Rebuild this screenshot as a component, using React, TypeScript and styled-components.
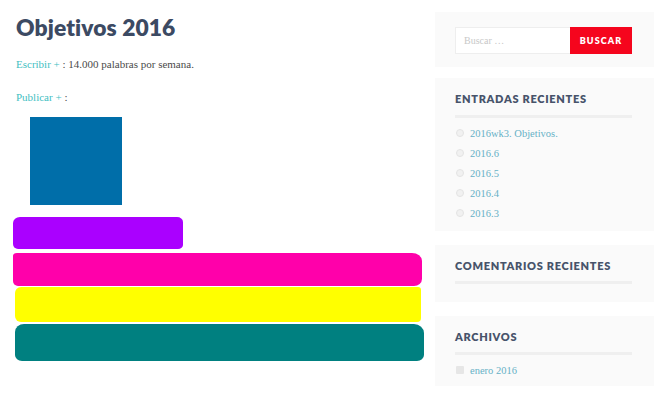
import React from "react";
import styled, { createGlobalStyle } from "styled-components";

const Global = createGlobalStyle`
  html, body { margin: 0; padding: 0; background: #ffffff; }
  body { font-family: "Liberation Serif", serif; }
  * { box-sizing: border-box; }
`;

const Page = styled.div`
  display: flex;
  align-items: flex-start;
  width: 654px;
  height: 400px;
  overflow: hidden;
`;

const Main = styled.main`
  width: 435px;
  flex: none;
  display: flex;
  flex-direction: column;
`;

const Title = styled.h1`
  margin: 14px 0 0 16px;
  font-family: "Lato", "Open Sans", sans-serif;
  font-weight: 800;
  font-size: 22.8px;
  line-height: 26px;
  letter-spacing: 0.1px;
  color: #3c4a63;
`;

const Para = styled.p<{ $top: number }>`
  margin: ${(p) => p.$top}px 0 0 16px;
  font-family: "Liberation Serif", serif;
  font-size: 11px;
  line-height: 20px;
  color: #4a4a4a;
`;

const TextLink = styled.a`
  color: #3fc0c2;
  text-decoration: none;
`;

const Chart = styled.div`
  display: flex;
  flex-direction: column;
  align-items: flex-start;
  margin-top: 10px;
`;

const Square = styled.div`
  width: 92px;
  height: 88px;
  margin-left: 30px;
  background: #006ea9;
`;

const Bar = styled.div<{
  $color: string;
  $left: number;
  $width: number;
  $height: number;
  $gap: number;
  $radius: string;
}>`
  margin: ${(p) => p.$gap}px 0 0 ${(p) => p.$left}px;
  width: ${(p) => p.$width}px;
  height: ${(p) => p.$height}px;
  background: ${(p) => p.$color};
  border-radius: ${(p) => p.$radius};
`;

const Sidebar = styled.aside`
  width: 219px;
  flex: none;
  padding-top: 12px;
  display: flex;
  flex-direction: column;
`;

const Widget = styled.section<{ $gap: number; $pt: number; $pb: number }>`
  margin-top: ${(p) => p.$gap}px;
  padding: ${(p) => p.$pt}px 22px ${(p) => p.$pb}px 20px;
  background: #fafafa;
`;

const SearchRow = styled.form`
  display: flex;
  height: 27px;
`;

const SearchInput = styled.div`
  width: 115px;
  height: 27px;
  background: #ffffff;
  border: 1px solid #eeeeee;
  border-right: none;
  padding-left: 8px;
  display: flex;
  align-items: center;
  font-family: "Liberation Serif", serif;
  font-size: 10px;
  color: #c8c8c8;
`;

const SearchButton = styled.div`
  width: 62px;
  height: 27px;
  background: #f5051d;
  color: #ffffff;
  display: flex;
  align-items: center;
  justify-content: center;
  font-family: "Lato", "Open Sans", sans-serif;
  font-weight: 800;
  font-size: 9px;
  letter-spacing: 1.1px;
`;

const WidgetTitle = styled.h2<{ $pb: number }>`
  margin: 0;
  padding-bottom: ${(p) => p.$pb}px;
  border-bottom: 3px solid #efefef;
  font-family: "Lato", "Open Sans", sans-serif;
  font-weight: 800;
  font-size: 11px;
  line-height: 16px;
  letter-spacing: 0.7px;
  text-transform: uppercase;
  color: #47536a;
`;

const List = styled.ul`
  list-style: none;
  margin: 5px 0 0;
  padding: 0;
`;

const Item = styled.li`
  display: flex;
  align-items: center;
  height: 20px;
  font-family: "Liberation Serif", serif;
  font-size: 10.5px;
  color: #67b1c6;
`;

const Dot = styled.span`
  width: 8px;
  height: 8px;
  border-radius: 50%;
  border: 1.5px solid #e4e4e4;
  background: #f1f1f1;
  margin: 0 6px 0 1px;
  flex: none;
`;

const Folder = styled.span`
  width: 8px;
  height: 8px;
  border-radius: 1px;
  background: #e6e6e6;
  margin: 0 6px 0 1px;
  flex: none;
`;

const bars = [
  { color: "#aa00ff", left: 13, width: 170, height: 32, gap: 12, radius: "7px 6px 5px 5px / 6px 5px 4px 5px" },
  { color: "#ff00aa", left: 13, width: 409, height: 33, gap: 4, radius: "4px 10px 8px 5px / 3px 8px 7px 5px" },
  { color: "#ffff00", left: 15, width: 406, height: 35, gap: 1, radius: "6px 3px 4px 6px" },
  { color: "#008080", left: 15, width: 409, height: 37, gap: 2, radius: "9px 10px 7px 7px / 8px 9px 6px 6px" },
];

const recent = ["2016wk3. Objetivos.", "2016.6", "2016.5", "2016.4", "2016.3"];

export default function App() {
  return (
    <>
      <Global />
      <Page>
        <Main>
          <Title>Objetivos 2016</Title>
          <Para $top={14}>
            <TextLink>Escribir +</TextLink> : 14.000 palabras por semana.
          </Para>
          <Para $top={13}>
            <TextLink>Publicar +</TextLink> :
          </Para>
          <Chart>
            <Square />
            {bars.map((b, i) => (
              <Bar
                key={i}
                $color={b.color}
                $left={b.left}
                $width={b.width}
                $height={b.height}
                $gap={b.gap}
                $radius={b.radius}
              />
            ))}
          </Chart>
        </Main>
        <Sidebar>
          <Widget $gap={0} $pt={15} $pb={13}>
            <SearchRow>
              <SearchInput>Buscar …</SearchInput>
              <SearchButton>BUSCAR</SearchButton>
            </SearchRow>
          </Widget>
          <Widget $gap={11} $pt={13} $pb={8}>
            <WidgetTitle $pb={8}>Entradas recientes</WidgetTitle>
            <List>
              {recent.map((r) => (
                <Item key={r}>
                  <Dot />
                  {r}
                </Item>
              ))}
            </List>
          </Widget>
          <Widget $gap={14} $pt={13} $pb={18}>
            <WidgetTitle $pb={7}>Comentarios recientes</WidgetTitle>
          </Widget>
          <Widget $gap={14} $pt={13} $pb={6}>
            <WidgetTitle $pb={7}>Archivos</WidgetTitle>
            <List>
              <Item>
                <Folder />
                enero 2016
              </Item>
            </List>
          </Widget>
        </Sidebar>
      </Page>
    </>
  );
}
